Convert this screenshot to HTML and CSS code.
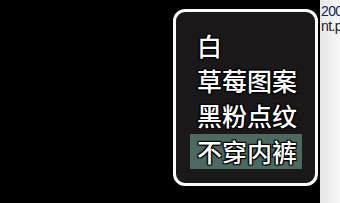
FILE: index.html
```html
<!DOCTYPE html>
<html lang="zh">
<head>
<meta charset="utf-8">
<link rel="stylesheet" href="styles.css">
</head>
<body>
<div class="page">
  <div class="stage">
    <div class="menu">
      <div class="item">白</div>
      <div class="item">草莓图案</div>
      <div class="item">黑粉点纹</div>
      <div class="item selected">不穿内裤</div>
    </div>
  </div>
  <div class="side">
    <div class="side-line"><span class="num">200</span><span class="us">_</span></div>
    <div class="side-line dark">nt.p</div>
  </div>
</div>
</body>
</html>
```
FILE: styles.css
```css
html, body {
  margin: 0;
  padding: 0;
  background: #000;
  width: 340px;
  height: 203px;
  overflow: hidden;
}
.page {
  display: flex;
  width: 340px;
  height: 203px;
}
.stage {
  width: 320px;
  flex: none;
  background: #000;
  padding: 9px 0 0 173px;
  box-sizing: border-box;
}
.menu {
  width: 145px;
  height: 177px;
  box-sizing: border-box;
  border: 3px solid #fafafa;
  border-radius: 12px;
  background: #1a1819;
  padding: 16px 0 0 14px;
  display: flex;
  flex-direction: column;
  align-items: flex-start;
}
.item {
  font-family: "Noto Sans CJK SC", "Noto Sans", sans-serif;
  font-weight: 500;
  font-size: 25px;
  line-height: 35px;
  height: 35px;
  color: #fff;
  padding: 0 7px;
  white-space: nowrap;
  text-shadow: 0 0 2px #000, 1px 1px 1px #000, -1px -1px 1px #000, 1px -1px 1px #000, -1px 1px 1px #000;
}
.item.selected {
  width: 112px;
  box-sizing: border-box;
  background: #4d6a61;
  margin-top: 1px;
}
.side {
  flex: 1;
  background: linear-gradient(to right, #e6e6e6, #f7f7f7);
  overflow: hidden;
  padding-top: 4px;
  font-family: "Liberation Sans", Arial, sans-serif;
  font-size: 14px;
  line-height: 15px;
  letter-spacing: -0.6px;
  white-space: nowrap;
}
.side-line {
  padding-left: 1px;
}
.num { color: #0c2466; }
.us { color: #d9822b; }
.dark { color: #222; }
```
